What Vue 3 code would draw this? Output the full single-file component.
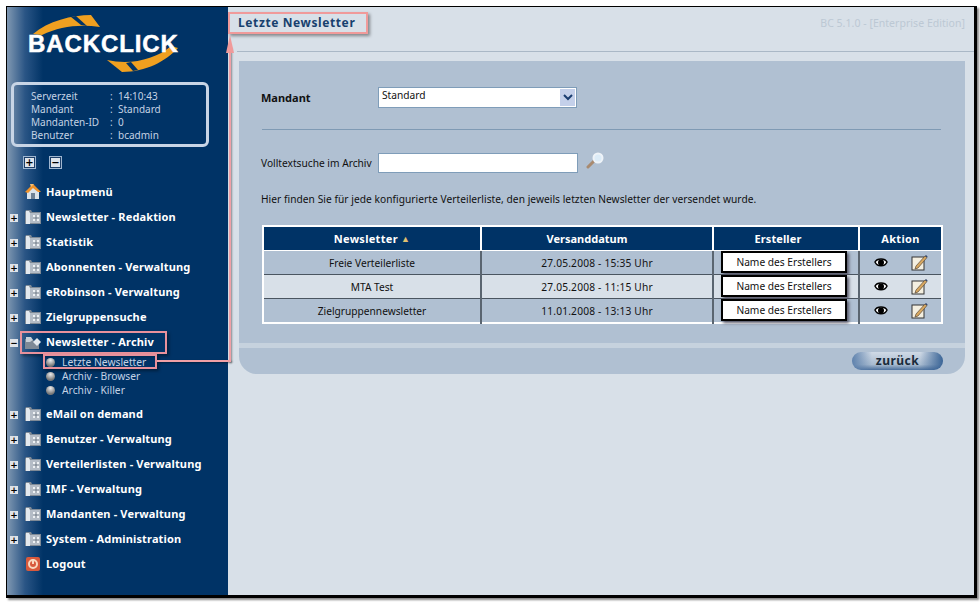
<script setup>
const before = ['Newsletter - Redaktion','Statistik','Abonnenten - Verwaltung','eRobinson - Verwaltung','Zielgruppensuche']
const after = ['eMail on demand','Benutzer - Verwaltung','Verteilerlisten - Verwaltung','IMF - Verwaltung','Mandanten - Verwaltung','System - Administration']
const subs = ['Letzte Newsletter','Archiv - Browser','Archiv - Killer']
const info = [['Serverzeit','14:10:43'],['Mandant','Standard'],['Mandanten-ID','0'],['Benutzer','bcadmin']]
const rows = [['Freie Verteilerliste','27.05.2008 - 15:35 Uhr'],['MTA Test','27.05.2008 - 11:15 Uhr'],['Zielgruppennewsletter','11.01.2008 - 13:13 Uhr']]
</script>

<template>
  <div class="page">
    <div class="window">
      <aside class="side">
        <div class="logo">
          <svg class="swoosh" width="160" height="62" viewBox="0 0 160 62">
            <path d="M3 19C18 6 42 0 61 0L70 12C50 9 30 11 12 20Z" fill="#f0a020"/>
            <path d="M41 2L46 1L57 11L51 10Z" fill="#003366"/>
            <path d="M148 33C136 46 116 57 92 57L77 45C100 50 125 45 141 31Z" fill="#f0a020"/>
            <path d="M96 48L101 47L108 55L103 56Z" fill="#003366"/>
          </svg>
          <span class="brand">BACKCLICK</span>
        </div>
        <div class="info">
          <div v-for="r in info" :key="r[0]" class="info-row"><span class="info-k">{{ r[0] }}</span><span class="info-c">:</span><span>{{ r[1] }}</span></div>
        </div>
        <div class="tools">
          <span class="tool">+</span><span class="tool">−</span>
        </div>
        <nav class="menu">
          <div class="item">
            <span class="sign"></span>
            <svg class="ico" width="16" height="17" viewBox="0 0 16 17"><path d="M2 9L8 2l6 7v7H2Z" fill="#dbe3ea"/><path d="M0 9L8 1l8 8-3 0L8 5 3 10Z" fill="#f0922a"/><path d="M5 1L9 1 6 4Z" fill="#f8c070"/><rect x="6" y="10" width="4" height="6" fill="#6f8296"/></svg>
            <span>Hauptmenü</span>
          </div>
          <div v-for="t in before" :key="t" class="item">
            <span class="sign plus">+</span>
            <svg class="ico" width="16" height="15" viewBox="0 0 16 15"><path d="M0 3 1 1h5l1 2h9v12H0Z" fill="#7f8a96"/><path d="M1 2h3l1 2v11H1Z" fill="#e4e9ee"/><rect x="5" y="4" width="10" height="10" fill="#b4bcc6"/><rect x="8" y="6" width="6" height="6" fill="#eef1f4"/><path d="M11 6v6M8 9h6" stroke="#6a7684"/></svg>
            <span>{{ t }}</span>
          </div>
          <div class="item">
            <span class="sign plus">−</span>
            <svg class="ico" width="16" height="14" viewBox="0 0 16 14"><path d="M0 4h7l2 2h5v8H0Z" fill="#7e8996"/><path d="M1 2h5l2 3-3 2H1Z" fill="#c8d0d8"/><path d="M12 3l4 4-4 4-4-4Z" fill="#e4e9ee"/></svg>
            <span>Newsletter - Archiv</span>
          </div>
          <div class="subs">
            <div v-for="s in subs" :key="s" class="sub"><span class="ball"></span>{{ s }}</div>
          </div>
          <div v-for="t in after" :key="t" class="item">
            <span class="sign plus">+</span>
            <svg class="ico" width="16" height="15" viewBox="0 0 16 15"><path d="M0 3 1 1h5l1 2h9v12H0Z" fill="#7f8a96"/><path d="M1 2h3l1 2v11H1Z" fill="#e4e9ee"/><rect x="5" y="4" width="10" height="10" fill="#b4bcc6"/><rect x="8" y="6" width="6" height="6" fill="#eef1f4"/><path d="M11 6v6M8 9h6" stroke="#6a7684"/></svg>
            <span>{{ t }}</span>
          </div>
          <div class="item">
            <span class="sign"></span>
            <svg class="ico" width="16" height="16" viewBox="0 0 16 16"><rect x="1" y="1" width="14" height="14" rx="2" fill="#d8593c"/><circle cx="8" cy="8" r="4" fill="none" stroke="#f8d8c0" stroke-width="2"/><path d="M8 3v5" stroke="#f8d8c0" stroke-width="2"/></svg>
            <span>Logout</span>
          </div>
        </nav>
      </aside>
      <main class="main">
        <header class="head">
          <h1 class="title">Letzte Newsletter</h1>
          <span class="version">BC 5.1.0 - [Enterprise Edition]</span>
        </header>
        <section class="panel">
          <div class="mandant">
            <b class="m-label">Mandant</b>
            <div class="select"><span>Standard</span><span class="arrow"><svg width="10" height="8" viewBox="0 0 10 8"><path d="M1 1l4 4 4-4" fill="none" stroke="#1a3d70" stroke-width="2"/></svg></span></div>
          </div>
          <hr class="rule" />
          <div class="search">
            <span class="s-label">Volltextsuche im Archiv</span>
            <div class="input"></div>
            <svg class="lens" width="18" height="17" viewBox="0 0 18 17"><path d="M2 15l6-6" stroke="#a88a70" stroke-width="3" stroke-linecap="round"/><circle cx="12" cy="6" r="4.5" fill="#dcecf8" stroke="#eef3f8" stroke-width="2"/></svg>
          </div>
          <p class="hint">Hier finden Sie für jede konfigurierte Verteilerliste, den jeweils letzten Newsletter der versendet wurde.</p>
          <table class="grid">
            <colgroup><col class="c1"/><col class="c2"/><col class="c3"/><col class="c4"/></colgroup>
            <thead>
              <tr><th>Newsletter <span class="sort">▲</span></th><th class="th-date">Versanddatum</th><th class="th-creator">Ersteller</th><th>Aktion</th></tr>
            </thead>
            <tbody>
              <tr v-for="(r, i) in rows" :key="r[0]" :class="{ alt: i === 1 }">
                <td>{{ r[0] }}</td>
                <td class="date">{{ r[1] }}</td>
                <td class="creator"><div class="namebox">Name des Erstellers</div></td>
                <td>
                  <div class="acts">
                    <svg width="14" height="11" viewBox="0 0 14 11"><path d="M1 5C3 1 11 1 13 5 11 10 3 10 1 5Z" fill="#fff" stroke="#000" stroke-width="1.5"/><circle cx="7" cy="5.5" r="3" fill="#000"/></svg>
                    <svg width="17" height="17" viewBox="0 0 17 17"><rect x="1" y="3" width="12" height="13" fill="#f4efe0" stroke="#333"/><path d="M5 12L14 2l2 1.5L7 14l-3 1Z" fill="#d8a860" stroke="#5a4a3a" stroke-width=".7"/><path d="M14 2l2 1.5 .6-1L15 1Z" fill="#33456a"/></svg>
                  </div>
                </td>
              </tr>
            </tbody>
          </table>
        </section>
        <footer class="foot"><button class="back">zurück</button></footer>
      </main>

      <div class="mark m-title"></div>
      <div class="mark m-menu"></div>
      <div class="mark m-sub"></div>
      <div class="line l-h"></div>
      <div class="line l-v"></div>
      <div class="tip"></div>
    </div>
  </div>
</template>

<style>
html, body { margin: 0; background: #fff; }
</style>

<style scoped>
.page { width: 980px; height: 602px; padding: 6px 0 0 6px; box-sizing: border-box; overflow: hidden; font-family: "Noto Sans", "Open Sans", sans-serif; }
.window { position: relative; display: flex; width: 967px; height: 588px; box-sizing: content-box; border: solid #000; border-width: 1px 3px 3px 1px; box-shadow: 2px 2px 2px #888; }
.side { width: 221px; flex: none; display: flex; flex-direction: column; color: #fff; background: linear-gradient(90deg, #8098b2 0, #2a5585 18px, #003366 36px); }
.logo { position: relative; height: 66px; margin: 7px 0 0 20px; flex: none; }
.swoosh { position: absolute; left: 3px; top: 1px; }
.brand { position: absolute; left: 1px; top: 15px; font: bold 24px/30px "Liberation Sans", sans-serif; color: #fff; letter-spacing: .9px; -webkit-text-stroke: .5px #fff; }
.info { margin: 2px 0 0 4px; padding: 5px 0 0 17px; height: 54px; width: 175px; flex: none; box-sizing: content-box; border: 3px solid #c8d5e6; border-radius: 6px; color: #c4d2e4; font-size: 10px; line-height: 13px; }
.info-row { display: flex; }
.info-k { width: 79px; flex: none; }
.info-c { width: 8px; flex: none; }
.tools { display: flex; gap: 15px; margin: 7px 0 0 17px; height: 16px; align-items: center; flex: none; }
.tool { width: 9px; height: 9px; border: 1px solid #1c3e68; outline: 1px solid #9fb6d0; background: #dfe5ec; color: #000; font: bold 10px/9px "DejaVu Sans", sans-serif; text-align: center; }
.menu { margin-top: 9px; display: flex; flex-direction: column; font-size: 11px; font-weight: 700; letter-spacing: .15px; }
.item { height: 25px; display: flex; align-items: center; white-space: nowrap; }
.sign { width: 15px; flex: none; margin-left: 3px; }
.plus { box-sizing: border-box; width: 8px; height: 8px; margin: 3px 7px 0 3px; background: #dfe3e8; color: #000; font: bold 9px/8px "DejaVu Sans", sans-serif; text-align: center; flex: none; }
.ico { width: 16px; margin-right: 5px; flex: none; }
.subs { height: 46px; margin-top: 1px; font-size: 10.3px; font-weight: 400; color: #c4d2e4; letter-spacing: 0; }
.sub { height: 14px; display: flex; align-items: center; padding-left: 39px; gap: 7px; }
.ball { width: 9px; height: 9px; border-radius: 50%; background: radial-gradient(circle at 50% 25%, #eee, #777 70%); }
.main { flex: 1; display: flex; flex-direction: column; background: #d8e0e8; }
.head { height: 44px; flex: none; margin: 0 0 9px 9px; border-bottom: 1px solid #aab8c6; display: flex; justify-content: space-between; padding-right: 9px; box-sizing: content-box; }
.title { margin: 7px 0 0 1px; font-size: 12px; line-height: 18px; color: #17406e; font-weight: 700; letter-spacing: .6px; }
.version { margin-top: 9px; font-size: 10.5px; line-height: 14px; color: #bcc8d4; letter-spacing: .04px; }
.panel { width: 726px; margin-left: 11px; height: 282px; box-sizing: border-box; padding: 26px 24px 0 22px; background: #b0c0d2; font-size: 10.2px; color: #111; }
.mandant { display: flex; align-items: center; height: 21px; }
.m-label { width: 117px; font-size: 11px; }
.select { width: 199px; height: 21px; box-sizing: border-box; background: #fff; border: 1px solid #7f9db9; display: flex; justify-content: space-between; padding: 0 1px 0 3px; line-height: 15px; }
.arrow { width: 15px; height: 17px; background: #c4d0ea; margin-top: 1px; display: flex; align-items: center; justify-content: center; }
.rule { border: 0; height: 1px; background: #7f9ab4; margin: 21px 0 23px 1px; }
.search { display: flex; align-items: center; height: 20px; }
.s-label { width: 117px; }
.input { width: 200px; height: 20px; box-sizing: border-box; background: #fff; border: 1px solid #7f9db9; }
.lens { margin: -6px 0 0 8px; }
.hint { margin: 19px 0 19px; line-height: 14px; letter-spacing: .04px; white-space: nowrap; }
.grid { width: 679px; margin-left: 1px; table-layout: fixed; border-collapse: collapse; border: 2px solid #fff; text-align: center; }
.c1 { width: 218px; } .c2 { width: 232px; } .c3 { width: 146px; } .c4 { width: 83px; }
th { height: 23px; padding: 0; background: #003366; color: #fff; font-size: 11px; border-left: 2px solid #fff; border-bottom: 1px solid #fff; letter-spacing: .3px; }
.th-date { padding-right: 20px; letter-spacing: 0; }
.th-creator { padding-right: 16px; letter-spacing: .1px; }
td { height: 23px; padding: 0; background: #b0c0d2; border-top: 1px solid #4a5560; border-left: 2px solid #5a6570; }
th:first-child { border-left: 0; } td:first-child { border-left: 0; }
tr.alt td { background: #d8e0e8; }
.date { letter-spacing: .2px; }
.sort { font-size: 9px; color: #e0c070; vertical-align: 1px; }
.creator { position: relative; }
.namebox { position: absolute; left: 7px; top: 0; width: 126px; height: 22px; box-sizing: border-box; border: 2px solid #000; background: #fff; line-height: 18px; box-shadow: 2px 2px 3px #556; color: #111; }
.acts { display: flex; justify-content: space-between; align-items: center; padding: 0 13px 0 14px; }
.foot { width: 726px; height: 26px; margin: 5px 0 0 11px; background: #b0c0d2; border-radius: 0 0 18px 18px; display: flex; justify-content: flex-end; align-items: center; padding-right: 22px; box-sizing: border-box; box-shadow: 0 -5px 0 #c6d2de; }
.back { width: 91px; height: 18px; padding: 0; border: 0; border-radius: 9px; background: linear-gradient(90deg, #5f82ad 0, transparent 22%, transparent 75%, #3a6496 100%), linear-gradient(#d0dae6, #a8bbd0 70%, #4a6f9c); color: #1a2a3a; font: bold 12px/18px "Noto Sans", sans-serif; letter-spacing: .5px; }
.mark { position: absolute; box-sizing: border-box; border: 2px solid #e8919c; box-shadow: 2px 2px 3px rgba(0,0,0,.4); }
.m-title { left: 221px; top: 5px; width: 140px; height: 22px; border-color: #f09a9a; }
.m-menu { left: 13px; top: 324px; width: 147px; height: 23px; }
.m-sub { left: 36px; top: 347px; width: 114px; height: 15px; }
.line { position: absolute; background: #f0a0a6; box-shadow: 1px 1px 2px rgba(0,0,0,.4); }
.l-h { left: 150px; top: 353px; width: 74px; height: 2px; }
.l-v { left: 222px; top: 40px; width: 2px; height: 315px; }
.tip { position: absolute; left: 219px; top: 28px; width: 0; height: 0; border: solid transparent; border-width: 0 4px 18px; border-bottom-color: #f09a9a; }
</style>
